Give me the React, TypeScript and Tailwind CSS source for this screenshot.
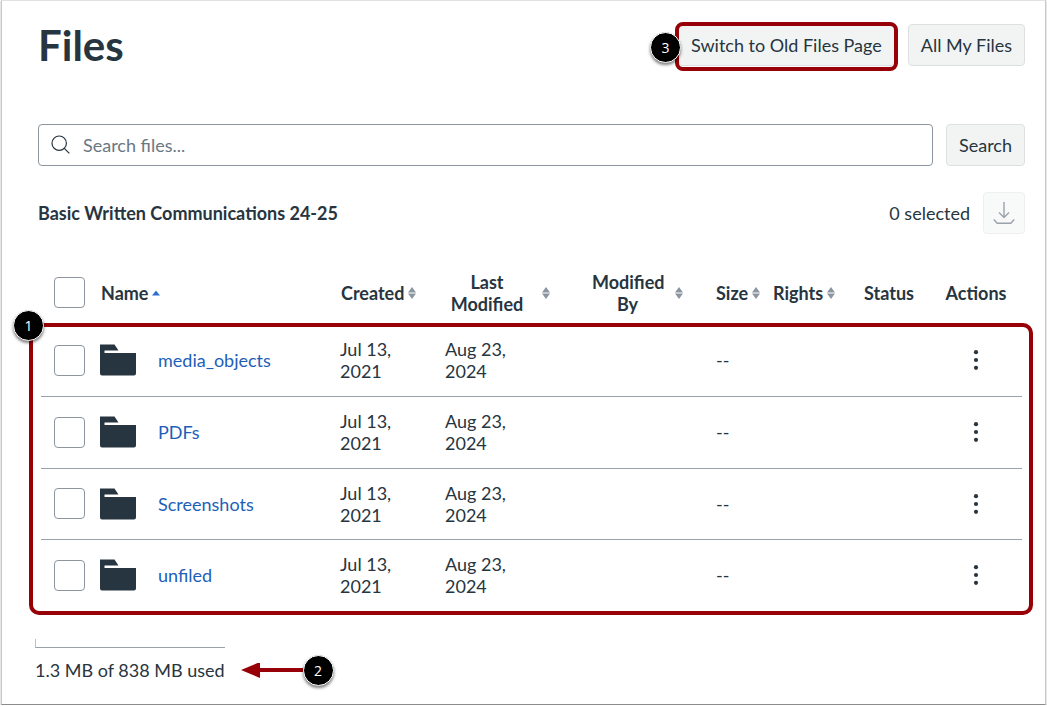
import React, { useState } from 'react';

const FOLDERS = ['media_objects', 'PDFs', 'Screenshots', 'unfiled'];

function Folder() {
  return (
    <svg viewBox="0 0 36 32" className="h-8 w-9 shrink-0" fill="#273540" aria-hidden="true">
      <path d="M0 0.5h14.5L18.5 6.5H4.5V9H36V29.5a2 2 0 0 1-2 2H2a2 2 0 0 1-2-2Z" />
    </svg>
  );
}

function SortArrows() {
  return (
    <svg viewBox="0 0 8 12" className="h-3 w-2 shrink-0" fill="#8b96a1" aria-hidden="true">
      <path d="M4 0l4 5.4H0zM4 12L0 6.6h8z" />
    </svg>
  );
}

function Badge({ children, className }: { children: React.ReactNode; className?: string }) {
  return (
    <span
      className={`flex size-[31px] items-center justify-center rounded-full border border-white bg-black font-['Open_Sans',sans-serif] text-[14px] text-white shadow-[0_2px_3px_rgba(0,0,0,0.5)] ${className ?? ''}`}
    >
      {children}
    </span>
  );
}

function Checkbox({ label, checked, onChange }: { label: string; checked: boolean; onChange: () => void }) {
  return (
    <input
      type="checkbox"
      aria-label={label}
      checked={checked}
      onChange={onChange}
      className="block size-[31px] appearance-none rounded border border-[#8d959f] bg-white checked:bg-[#273540]"
    />
  );
}

const buttonClass = 'h-[42px] rounded border border-[#dde0e2] bg-[#f2f4f4] px-3 whitespace-nowrap';

function App() {
  const [query, setQuery] = useState('');
  const [selected, setSelected] = useState<string[]>([]);

  const toggle = (name: string) => {
    setSelected(selected.includes(name) ? selected.filter((n) => n !== name) : [...selected, name]);
  };

  const toggleAll = () => {
    setSelected(selected.length === FOLDERS.length ? [] : FOLDERS);
  };

  return (
    <div className="mx-px border border-[#c8c8c8] border-t-[#e2e2e2] border-b-[#8c8c8c] bg-white pt-[23px] pr-[17px] pb-[23px] pl-[33px] font-[Lato,sans-serif] text-[18px] leading-[22px] text-[#273540] shadow-[0_1px_2px_rgba(0,0,0,0.3)]">
      <header className="flex items-center justify-between px-[3px]">
        <h1 className="text-[42px] leading-[42px] font-bold">Files</h1>
        <div className="flex gap-[13px]">
          <div className="relative">
            <button type="button" className={buttonClass}>Switch to Old Files Page</button>
            <div className="pointer-events-none absolute -inset-x-[3px] -top-0.5 -bottom-[5px] rounded-lg border-4 border-[#970006]" />
            <Badge className="absolute top-2 -left-7">3</Badge>
          </div>
          <button type="button" className={buttonClass}>All My Files</button>
        </div>
      </header>

      <form onSubmit={(e) => e.preventDefault()} className="mt-[58px] flex gap-[13px] px-[3px]">
        <div className="relative flex-1">
          <svg
            viewBox="0 0 20 20"
            className="absolute top-[11px] left-[13px] size-5"
            fill="none"
            stroke="#273540"
            strokeWidth="1.2"
            aria-hidden="true"
          >
            <circle cx="8.2" cy="8.2" r="7.2" />
            <path d="M13.3 13.3l5 5" />
          </svg>
          <input
            type="text"
            aria-label="Search files"
            placeholder="Search files..."
            value={query}
            onChange={(e) => setQuery(e.target.value)}
            className="h-[42px] w-full rounded border border-[#8d959f] pr-3 pl-11 placeholder:text-[#6a7883]"
          />
        </div>
        <button type="submit" className={buttonClass}>Search</button>
      </form>

      <div className="mt-[26px] flex items-center justify-between px-[3px]">
        <h2 className="font-bold">Basic Written Communications 24-25</h2>
        <div className="flex items-center gap-[13px]">
          <span>{selected.length} selected</span>
          <button
            type="button"
            aria-label="Download"
            disabled={selected.length === 0}
            className="flex size-[42px] items-center justify-center rounded border border-[#eef0f0] bg-[#f8f9f9]"
          >
            <svg viewBox="0 0 22 24" className="h-6 w-[22px]" fill="none" stroke="#9ba3aa" strokeWidth="1.4" aria-hidden="true">
              <path d="M11 1v15.5M6 11.5l5 5 5-5M0.8 18.5l3.4 3.7h13.6l3.4-3.7" />
            </svg>
          </button>
        </div>
      </div>

      <div className="relative mx-[6px] mt-[26px]">
        <table className="w-full table-fixed text-left">
          <colgroup>
            <col className="w-[56px]" />
            <col />
            <col className="w-[105px]" />
            <col className="w-[147px]" />
            <col className="w-[124px]" />
            <col className="w-[57px]" />
            <col className="w-[91px]" />
            <col className="w-[69px]" />
            <col className="w-[92px]" />
          </colgroup>
          <thead>
            <tr className="h-[65px] *:px-[3px]">
              <th>
                <div className="pl-[10px]">
                  <Checkbox label="Select all" checked={selected.length === FOLDERS.length} onChange={toggleAll} />
                </div>
              </th>
              <th aria-sort="ascending">
                <button type="button" className="flex items-center gap-1 pl-px">
                  Name
                  <svg viewBox="0 0 8 12" className="h-3 w-2" fill="#2f6fd0" aria-hidden="true">
                    <path d="M4 3.5l4 5H0z" />
                  </svg>
                </button>
              </th>
              <th>
                <button type="button" className="flex items-center gap-1 pl-px">
                  Created
                  <SortArrows />
                </button>
              </th>
              <th>
                <button type="button" className="flex items-center gap-[13px]">
                  <span className="w-[84px]">Last Modified</span>
                  <SortArrows />
                </button>
              </th>
              <th>
                <button type="button" className="flex items-center gap-3">
                  <span className="w-[71px]">Modified By</span>
                  <SortArrows />
                </button>
              </th>
              <th>
                <button type="button" className="flex items-center gap-1">
                  Size
                  <SortArrows />
                </button>
              </th>
              <th>
                <button type="button" className="flex items-center gap-1">
                  Rights
                  <SortArrows />
                </button>
              </th>
              <th>Status</th>
              <th className="text-center">Actions</th>
            </tr>
          </thead>
          <tbody>
            {FOLDERS.map((name) => (
              <tr key={name} className="h-[71px] border-b border-[#9aa2ab] *:px-[3px] last:border-b-0 even:h-[72px]">
                <td>
                  <div className="pl-[10px]">
                    <Checkbox label={name} checked={selected.includes(name)} onChange={() => toggle(name)} />
                  </div>
                </td>
                <td>
                  <div className="flex items-center gap-[22px]">
                    <Folder />
                    <a href="#" className="text-[#1d5fb8]">{name}</a>
                  </div>
                </td>
                <td><div className="w-16">Jul 13, 2021</div></td>
                <td><div className="w-16">Aug 23, 2024</div></td>
                <td />
                <td>--</td>
                <td />
                <td />
                <td>
                  <button type="button" aria-label={`Actions for ${name}`} className="mx-auto block">
                    <svg viewBox="0 0 20 20" className="size-5" fill="#273540" aria-hidden="true">
                      <circle cx="10" cy="2.2" r="2.1" />
                      <circle cx="10" cy="10" r="2.1" />
                      <circle cx="10" cy="17.8" r="2.1" />
                    </svg>
                  </button>
                </td>
              </tr>
            ))}
          </tbody>
        </table>
        <div className="pointer-events-none absolute top-[63px] -right-[11px] -bottom-1 -left-3 rounded-[10px] border-4 border-[#970006]" />
        <Badge className="absolute top-[50px] -left-7">1</Badge>
      </div>

      <footer className="mt-7 flex items-end gap-4">
        <div>
          <div role="progressbar" aria-valuenow={1.3} aria-valuemax={838} aria-label="Storage used" className="h-[9px] border-b border-l border-b-[#9aa2ab] border-l-[#a9c4e6]" />
          <p className="mt-[11px]">1.3 MB of 838 MB used</p>
        </div>
        <div className="-mb-[5px] flex items-center">
          <svg viewBox="0 0 62 16" className="h-4 w-[62px]" fill="#970006" aria-hidden="true">
            <path d="M0 7L19 -1v6h43v4H19v6z" />
          </svg>
          <Badge>2</Badge>
        </div>
      </footer>
    </div>
  );
}

export default App;
